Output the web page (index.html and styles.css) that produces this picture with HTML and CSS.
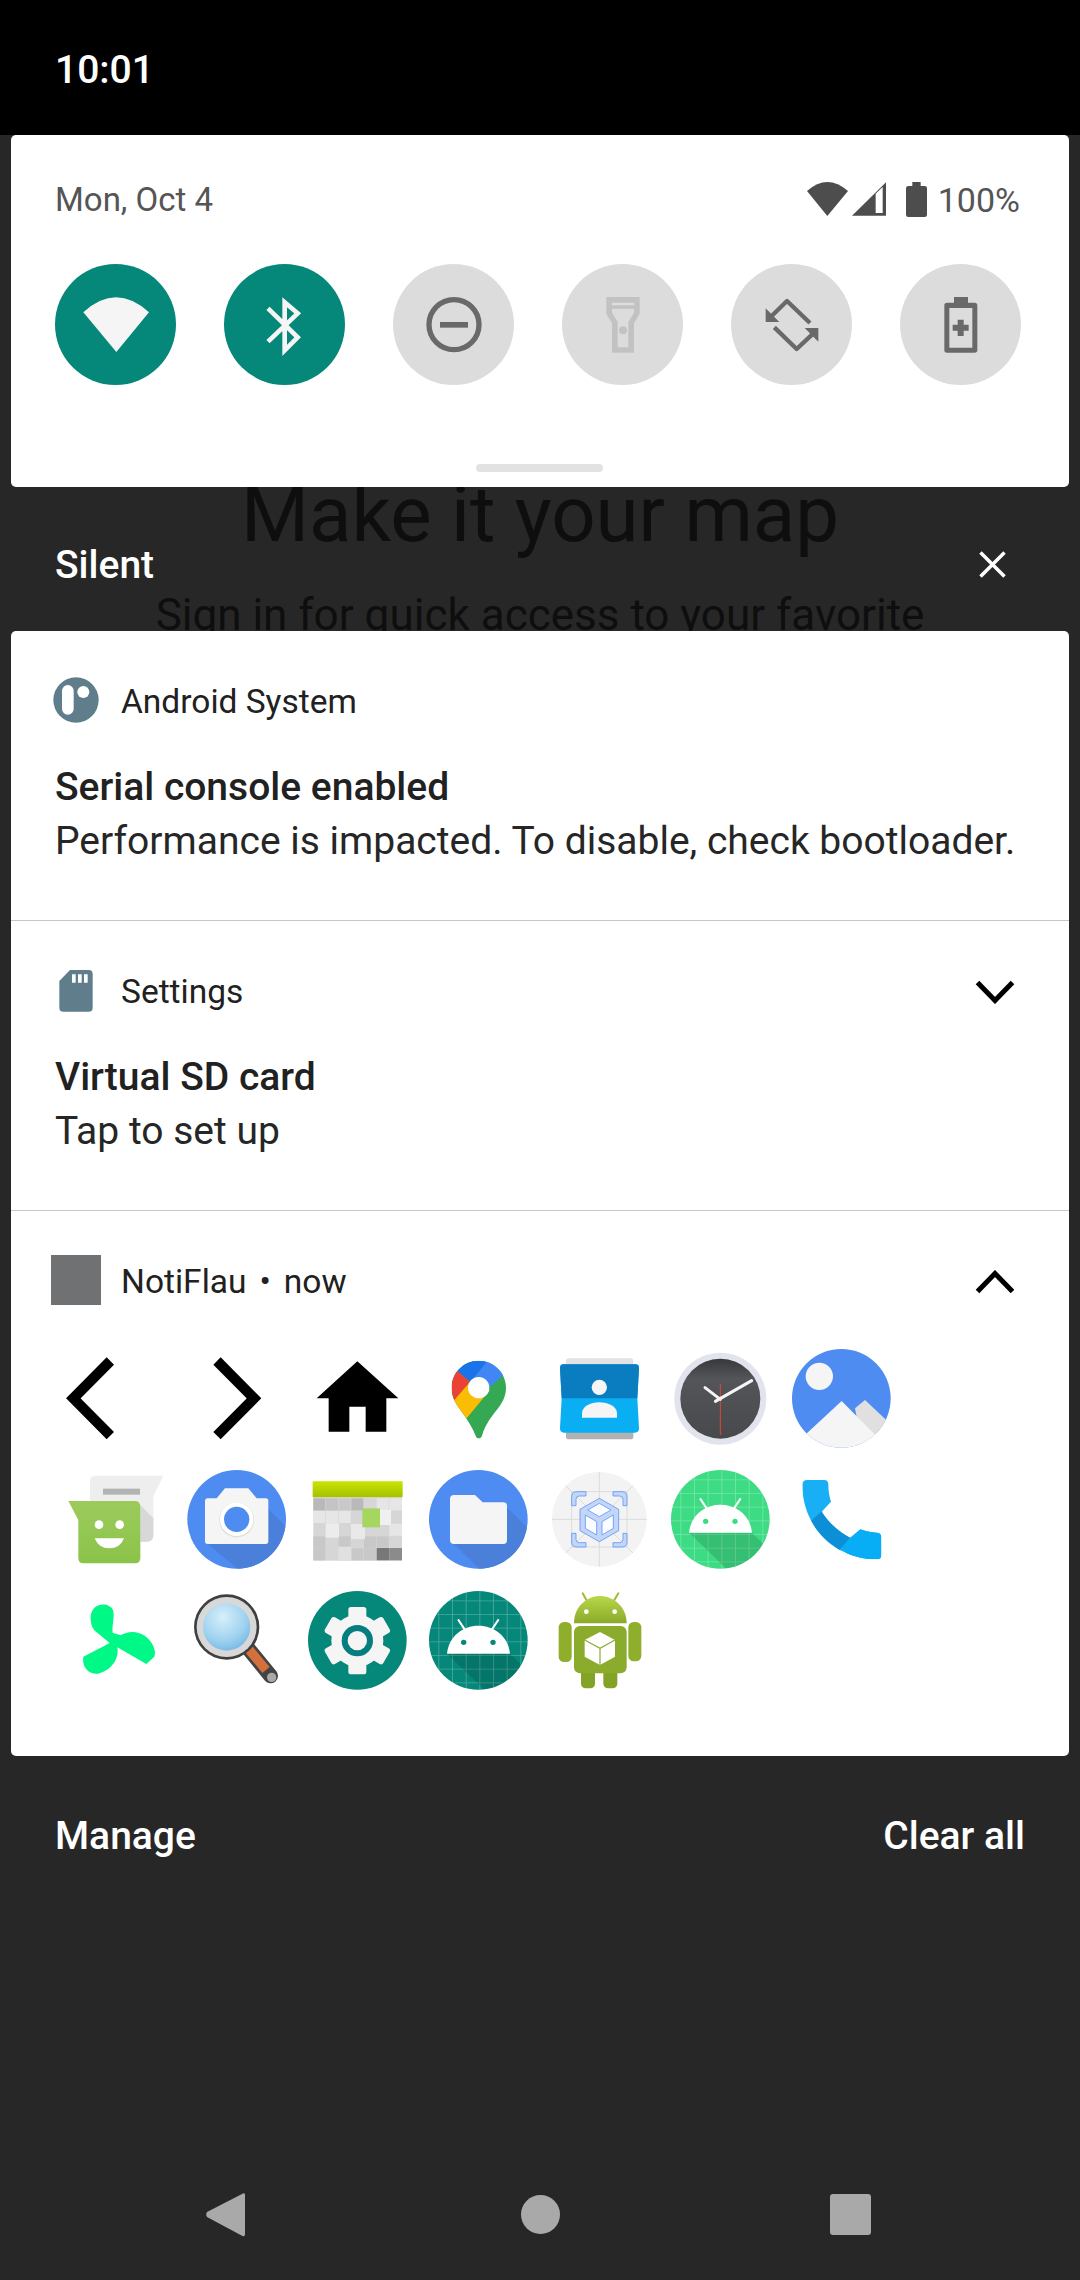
FILE: index.html
```html
<!DOCTYPE html>
<html lang="en">
<head>
<meta charset="utf-8">
<title>Notification shade</title>
<link rel="stylesheet" href="styles.css">
</head>
<body>
<svg class="defs" width="0" height="0" aria-hidden="true">
  <defs>
    <pattern id="grid" width="41" height="41" patternUnits="userSpaceOnUse" x="20" y="20">
      <path d="M0 0H41M0 0V41" stroke="#fff" stroke-opacity=".28" stroke-width="5" fill="none"/>
    </pattern>
    <symbol id="droid" viewBox="0 0 363 363">
      <circle cx="181" cy="181" r="148" fill="currentColor"/>
      <circle cx="181" cy="181" r="148" fill="url(#grid)"/>
      <clipPath id="droidclip"><circle cx="181" cy="181" r="148"/></clipPath>
      <path clip-path="url(#droidclip)" d="M87 221H276L345 290V340H210Z" fill="#000" fill-opacity=".13"/>
      <path d="M120 118L140 148M242 118L222 148" stroke="#fff" stroke-width="6" fill="none"/>
      <path d="M87 221C92 168 135 137 181 137C228 137 271 168 276 221Z" fill="#fff"/>
      <circle cx="137" cy="187" r="8" fill="currentColor"/>
      <circle cx="225" cy="187" r="8" fill="currentColor"/>
    </symbol>
    <linearGradient id="cal" x1="0" y1="0" x2="0" y2="1"><stop offset="0" stop-color="#c9e400"/><stop offset="1" stop-color="#a4c000"/></linearGradient>
    <linearGradient id="face" x1="0" y1="0" x2="0" y2="1"><stop offset="0" stop-color="#36383b"/><stop offset=".25" stop-color="#535558"/><stop offset="1" stop-color="#47494c"/></linearGradient>
    <radialGradient id="lens" cx=".42" cy=".3" r=".8"><stop offset="0" stop-color="#d8effa"/><stop offset=".6" stop-color="#9fd2f0"/><stop offset="1" stop-color="#6db2e0"/></radialGradient>
    <linearGradient id="dome" x1="0" y1="0" x2="0" y2="1"><stop offset="0" stop-color="#b9d84a"/><stop offset="1" stop-color="#8aa92a"/></linearGradient>
    <linearGradient id="msg" x1="0" y1="0" x2="0" y2="1"><stop offset="0" stop-color="#9ccb5c"/><stop offset="1" stop-color="#8bc34a"/></linearGradient>
  </defs>
</svg>

<div class="shade">
  <header class="status"><span class="clock">10:01</span></header>

  <section class="qs">
    <div class="qs-head">
      <span class="date">Mon, Oct 4</span>
      <div class="sys">
        <svg class="sys-wifi" viewBox="832 33 123 102"><path d="M832 60Q893 6 955 60L893 135Z"/></svg>
        <svg class="sys-signal" viewBox="965 35 102 102"><path d="M965 136L1067 36V136Z"/><path class="cut" d="M1036 128V70L1057 50V128Z"/></svg>
        <svg class="sys-batt" viewBox="1128 30 63 105"><path d="M1147 30H1172V42H1184Q1191 42 1191 49V128Q1191 135 1184 135H1135Q1128 135 1128 128V49Q1128 42 1135 42H1147Z"/></svg>
        <span class="pct">100%</span>
      </div>
    </div>
    <div class="tiles">
      <svg class="tile on" viewBox="75 42 363 363"><circle cx="256.500" cy="223.500" r="181.500"/><path class="gl" d="M160 187Q258 97 357 187L259 306Z"/></svg>
      <svg class="tile on" viewBox="582 42 363 363"><circle cx="763.500" cy="223.500" r="181.500"/><path class="gs" d="M714 175L803 262L764 301V157L803 190L714 275"/></svg>
      <svg class="tile" viewBox="1089 42 363 363"><circle cx="1270.500" cy="223.500" r="181.500"/><circle class="ds" cx="1272" cy="224" r="75"/><rect class="df" x="1230" y="216" width="84" height="17"/></svg>
      <svg class="tile" viewBox="96 282 363 363"><circle cx="277.500" cy="463.500" r="181.500"/><path class="tf" d="M229 381H329V431L312 460V548H246V460L229 431Z"/><path class="tb" d="M246 416H312V428L295 456V532H263V456L246 428Z"/><rect class="tb" x="245" y="398" width="68" height="8"/><circle class="tf" cx="279" cy="481" r="12"/></svg>
      <svg class="tile" viewBox="603 282 363 363"><circle cx="784.500" cy="463.500" r="181.500"/><path class="rs" d="M722 441L771 393L840 459M850 490L800 537L733 472"/><path class="df" d="M707 415V456H748ZM865 515V474H824Z"/></svg>
      <svg class="tile" viewBox="1110 282 363 363"><circle cx="1291.500" cy="463.500" r="181.500"/><path class="df" d="M1272 381H1314V398H1334Q1342 398 1342 406V540Q1342 548 1334 548H1251Q1243 548 1243 540V406Q1243 398 1251 398H1272ZM1258 414V533H1327V414Z"/><path class="df" d="M1283 449H1301V464H1316V482H1301V498H1283V482H1268V464H1283Z"/></svg>
    </div>
    <div class="handle"></div>
  </section>

  <div class="shelf">
    <div class="behind">
      <p class="behind-h">Make it your map</p>
      <p class="behind-p">Sign in for quick access to your favorite</p>
    </div>
    <span class="shelf-title">Silent</span>
    <svg class="shelf-x" viewBox="0 0 27 27"><path d="M1.500 1.500L25.500 25.500M25.500 1.500L1.500 25.500"/></svg>
  </div>

  <section class="card">
    <article class="notif">
      <div class="n-head">
        <svg class="n-icon" viewBox="33 36 150 150"><circle class="slate" cx="108" cy="105" r="68"/><rect class="white" x="66" y="60" width="35" height="89" rx="17.500"/><circle class="white" cx="130" cy="81" r="18"/></svg>
        <span class="app">Android System</span>
      </div>
      <h2 class="n-title">Serial console enabled</h2>
      <p class="n-body">Performance is impacted. To disable, check bootloader.</p>
    </article>

    <article class="notif">
      <div class="n-head">
        <svg class="n-icon" viewBox="33 903 150 150"><path class="slate" d="M90 912H146Q158 912 158 924V1025Q158 1037 146 1037H70Q58 1037 58 1025V945Z"/><path class="white" d="M96 925H107V950H96ZM114 925H125V950H114ZM132 925H143V950H132Z"/></svg>
        <span class="app">Settings</span>
        <svg class="chev" viewBox="0 0 40 24"><path d="M2.500 2.500L20 20.500L37.500 2.500"/></svg>
      </div>
      <h2 class="n-title">Virtual SD card</h2>
      <p class="n-body">Tap to set up</p>
    </article>

    <article class="notif last">
      <div class="n-head">
        <span class="n-square"></span>
        <span class="app">NotiFlau<span class="dot">•</span>now</span>
        <svg class="chev" viewBox="0 0 40 24"><path d="M2.500 21.500L20 3.500L37.500 21.500"/></svg>
      </div>
      <div class="icons">
        <!-- row 1 -->
        <svg class="ic" viewBox="75 294 363 363"><path class="k" d="M241 363L130 475L241 587"/></svg>
        <svg class="ic" viewBox="438 294 363 363"><path class="k" d="M561 363L672 475L561 587"/></svg>
        <svg class="ic" viewBox="801 294 363 363"><path d="M982 364L1105 475H1069V575H1007V500H958V575H896V475H860Z"/></svg>
        <svg class="ic" viewBox="-6 -6 363 363">
          <clipPath id="pin"><path d="M176 62C221 62 258 98 258 143C258 200 205 220 186 287C183 298 170 298 167 287C158 262 142 240 125 215C110 195 95 175 95 143C95 98 131 62 176 62Z"/></clipPath>
          <g clip-path="url(#pin)">
            <rect x="80" y="50" width="190" height="260" fill="#34a853"/>
            <path d="M150 125L90 190L140 235L210 150Z" fill="#fbbc04"/>
            <path d="M112 92L150 125L100 184L80 170V100Z" fill="#ea4335"/>
            <path d="M112 92L150 125L162 115L210 60H120Z" fill="#1a73e8"/>
            <path d="M205 60L160 115L205 145L250 106L240 60Z" fill="#4285f4"/>
          </g>
          <circle cx="176" cy="143" r="32" fill="#fff"/>
        </svg>
        <svg class="ic" viewBox="177 294 363 363">
          <rect x="258" y="355" width="202" height="30" rx="8" fill="#e2e2e2"/>
          <rect x="258" y="570" width="202" height="28" rx="8" fill="#b1b1b1"/>
          <path d="M250 373H467Q477 373 477 385L472 475L477 565Q477 578 465 578H252Q240 578 240 565L245 475L240 385Q240 373 250 373Z" fill="#0aaef2"/>
          <path d="M250 373H467Q477 373 477 385L472 475H245L240 385Q240 373 250 373Z" fill="#0a7dc1"/>
          <circle cx="358" cy="442" r="23" fill="#f5f5f5"/>
          <path d="M306 533H411V520C411 500 385 487 358 487C331 487 306 500 306 520Z" fill="#f5f5f5"/>
        </svg>
        <svg class="ic" viewBox="540 294 363 363">
          <circle cx="721" cy="476" r="138" fill="#e1e4ec"/>
          <circle cx="721" cy="476" r="120" fill="url(#face)"/>
          <path class="clock-r" d="M721 432V585"/>
          <path class="clock-h" d="M675 443L721 478M815 422L706 484"/>
        </svg>
        <svg class="ic" viewBox="903 294 363 363">
          <clipPath id="gal"><circle cx="1084" cy="475" r="148"/></clipPath>
          <circle cx="1084" cy="475" r="148" fill="#4e8cf2"/>
          <g clip-path="url(#gal)">
            <path d="M1125 505L1155 480L1240 560V640H1150Z" fill="#e0e0e0"/>
            <path d="M1085 483L1230 630H950L975 585Z" fill="#f5f5f5"/>
          </g>
          <circle cx="1018" cy="409" r="41" fill="#f5f5f5"/>
        </svg>
        <!-- row 2 -->
        <svg class="ic" viewBox="75 657 363 363">
          <path d="M198 707H400L370 768V885Q370 905 350 905H198Q180 905 180 885V725Q180 707 198 707Z" fill="#eee"/>
          <path d="M331 795L370 835V885Q370 905 350 905H331Z" fill="#d8d8d8"/>
          <rect x="219" y="746" width="111" height="18" fill="#b3b3b3"/>
          <path d="M115 783H315Q331 783 331 800V955Q331 970 315 970H160Q145 970 145 955V840Z" fill="url(#msg)"/>
          <circle cx="207" cy="854" r="13" fill="#fff"/><circle cx="269" cy="854" r="13" fill="#fff"/>
          <path d="M194 895H282Q270 925 238 925Q206 925 194 895Z" fill="#fff"/>
        </svg>
        <svg class="ic" viewBox="438 657 363 363">
          <clipPath id="cam"><circle cx="620" cy="838" r="148"/></clipPath>
          <circle cx="620" cy="838" r="148" fill="#4e8cf2"/>
          <path clip-path="url(#cam)" d="M680 775L800 890V1000H640L525 905Z" fill="#4a80da"/>
          <path d="M533 775H560L585 745H655L680 775H707Q715 775 715 783V904Q715 912 707 912H533Q525 912 525 904V783Q525 775 533 775Z" fill="#f5f5f5"/>
          <circle cx="620" cy="840" r="52" fill="#dedede"/>
          <circle cx="620" cy="838" r="50" fill="#fff"/><circle cx="620" cy="838" r="38" fill="#4e8cf2"/>
        </svg>
        <svg class="ic" viewBox="801 657 363 363">
          <rect x="850" y="772" width="266" height="190" fill="#d6d6d6"/>
          <g fill="#b9b9b9"><rect x="850" y="775" width="36" height="36"/><rect x="888" y="775" width="36" height="36" fill="#c4c4c4"/><rect x="926" y="775" width="36" height="36" fill="#c9c9c9"/><rect x="964" y="775" width="36" height="36"/></g>
          <g fill="#e6e6e6"><rect x="850" y="813" width="36" height="36"/><rect x="888" y="813" width="36" height="36"/><rect x="926" y="813" width="36" height="36"/><rect x="1040" y="775" width="36" height="36"/><rect x="1078" y="775" width="38" height="36"/><rect x="1078" y="851" width="38" height="36"/></g>
          <g fill="#c8c8c8"><rect x="850" y="889" width="36" height="36"/><rect x="926" y="889" width="36" height="36"/><rect x="1002" y="889" width="36" height="36"/><rect x="1040" y="889" width="36" height="34"/><rect x="850" y="925" width="36" height="36"/><rect x="964" y="925" width="36" height="36"/><rect x="1002" y="925" width="36" height="36"/></g>
          <rect x="1040" y="924" width="38" height="37" fill="#787878"/><rect x="1078" y="924" width="38" height="37" fill="#8b8b8b"/>
          <rect x="848" y="724" width="270" height="48" rx="3" fill="url(#cal)"/>
          <rect x="887" y="850" width="40" height="43" fill="#ececec"/>
          <rect x="963" y="852" width="42" height="45" fill="#e9e9e9"/>
          <rect x="925" y="920" width="39" height="42" fill="#e0e0e0"/>
          <rect x="1050" y="810" width="33" height="45" fill="#f0f0f0"/>
          <rect x="997" y="805" width="53" height="57" fill="#a6d65f"/>
        </svg>
        <svg class="ic" viewBox="1164 657 363 363">
          <clipPath id="fil"><circle cx="1345" cy="838" r="148"/></clipPath>
          <circle cx="1345" cy="838" r="148" fill="#4e8cf2"/>
          <path clip-path="url(#fil)" d="M1415 787L1520 890V1000H1360L1265 905Z" fill="#4a80da"/>
          <path d="M1272 765H1335L1358 787H1420Q1431 787 1431 798V900Q1431 912 1420 912H1272Q1260 912 1260 900V777Q1260 765 1272 765Z" fill="#f5f5f5"/>
        </svg>
        <svg class="ic" viewBox="177 657 363 363">
          <circle cx="358" cy="838" r="142" fill="#f3f3f3"/>
          <path class="ar-g" d="M358 696V980M216 838H500M257 737L459 939M459 737L257 939M275 755H441V921H275Z"/>
          <path class="ar-c" d="M275 797V770Q275 755 290 755H318V768H298Q288 768 288 778V797ZM441 797V770Q441 755 426 755H399V768H419Q429 768 429 778V797ZM275 880V906Q275 921 290 921H318V908H298Q288 908 288 898V880ZM441 880V906Q441 921 426 921H399V908H419Q429 908 429 898V880Z"/>
          <path class="ar-c" d="M358 775L416 808V872L358 905L300 872V808Z"/>
          <path class="ar-w" d="M358 790L393 810L358 830L323 810ZM316 825L350 845V885L316 865ZM400 825V865L366 885V845Z"/>
        </svg>
        <svg class="ic droid-g"><use href="#droid"/></svg>
        <svg class="ic" viewBox="903 657 363 363">
          <clipPath id="ph"><path d="M982 720H1032Q1045 720 1045 733C1045 755 1048 770 1053 785L1025 815C1050 855 1085 880 1110 893L1141 868C1155 873 1172 878 1190 878Q1204 878 1204 892V944Q1204 958 1190 958C1065 958 967 860 967 735Q967 720 982 720Z"/></clipPath>
          <g clip-path="url(#ph)">
            <rect x="960" y="715" width="250" height="250" fill="#18aff4"/>
            <path d="M1085 922L1141 868L1210 860V965H1120Z" fill="#08aef5"/>
            <path d="M985 850L1027 812L1113 890L1083 925L1060 960L980 900Z" fill="#0c8fd6"/>
          </g>
        </svg>
        <!-- row 3 -->
        <svg class="ic" viewBox="75 1020 363 363">
          <path class="fan" d="M238 1208L192 1170C178 1150 178 1115 195 1102C212 1088 240 1092 249 1110C255 1130 245 1160 248 1178L272 1186C290 1174 320 1170 345 1188C368 1205 380 1232 373 1250L349 1272L262 1222C268 1250 250 1290 205 1301C175 1304 155 1280 160 1250L238 1210Z"/>
        </svg>
        <svg class="ic" viewBox="438 1020 363 363">
          <path class="mg-o" d="M655 1226L722 1308"/>
          <path class="mg-i" d="M655 1226L708 1290"/>
          <circle cx="725" cy="1312" r="14" fill="#a9a9a9"/>
          <circle cx="590" cy="1161" r="98" fill="#3f3f3f"/>
          <circle cx="590" cy="1161" r="90" fill="#d8d8d8"/>
          <circle cx="590" cy="1161" r="71" fill="url(#lens)"/>
        </svg>
        <svg class="ic" viewBox="801 1020 363 363">
          <circle cx="982" cy="1201" r="148" fill="#058779"/>
          <g class="gear" transform="translate(982 1202)">
            <circle r="78"/>
            <rect x="-27" y="-101" width="54" height="50" rx="8"/>
            <rect x="-27" y="-101" width="54" height="50" rx="8" transform="rotate(60)"/>
            <rect x="-27" y="-101" width="54" height="50" rx="8" transform="rotate(120)"/>
            <rect x="-27" y="-101" width="54" height="50" rx="8" transform="rotate(180)"/>
            <rect x="-27" y="-101" width="54" height="50" rx="8" transform="rotate(240)"/>
            <rect x="-27" y="-101" width="54" height="50" rx="8" transform="rotate(300)"/>
            <circle r="47" fill="#067d7e"/>
            <circle r="29"/>
          </g>
        </svg>
        <svg class="ic droid-t"><use href="#droid"/></svg>
        <svg class="ic" viewBox="177 1020 363 363">
          <path class="bot-a" d="M308 1060L322 1085M415 1060L400 1085"/>
          <rect x="236" y="1146" width="39" height="120" rx="16" fill="#8fae2c"/>
          <rect x="445" y="1146" width="39" height="118" rx="16" fill="#8fae2c"/>
          <rect x="303" y="1285" width="42" height="60" rx="14" fill="#83a226"/>
          <rect x="370" y="1285" width="42" height="60" rx="14" fill="#83a226"/>
          <rect x="282" y="1158" width="158" height="142" rx="18" fill="#8bab2c"/>
          <path d="M282 1150C282 1100 320 1068 360 1068C400 1068 440 1100 440 1150Z" fill="url(#dome)"/>
          <circle cx="319" cy="1115" r="7" fill="#fff"/><circle cx="404" cy="1115" r="7" fill="#fff"/>
          <path d="M360 1176L405 1200V1250L360 1275L314 1250V1200Z" fill="#fff"/>
          <path class="bot-l" d="M314 1200L360 1225L405 1200M360 1225V1275"/>
        </svg>
      </div>
    </article>
  </section>

  <footer class="foot">
    <span class="act">Manage</span>
    <span class="act">Clear all</span>
  </footer>

  <nav class="navbar">
    <svg class="nv nv-back" viewBox="0 0 39 45"><path d="M37 1.500Q39 0.500 39 3V42Q39 45 36.500 44L1 25Q-0.500 22.500 1 20Z"/></svg>
    <span class="nv-home"></span>
    <span class="nv-rec"></span>
  </nav>
</div>
</body>
</html>
```

FILE: styles.css
```css
* { box-sizing: border-box; }
html, body { margin: 0; padding: 0; }
body { width: 1080px; height: 2280px; overflow: hidden; background: #272727; font-family: Roboto, "Noto Sans", sans-serif; }
.defs { display: block; height: 0; }
p, h2 { margin: 0; font-weight: inherit; font-size: inherit; }
svg { display: block; flex: none; }
.shade { display: flex; flex-direction: column; width: 1080px; height: 2280px; }

.status { height: 135px; background: #000; padding: 46px 0 0 55px; }
.clock { display: block; font-size: 39px; line-height: 48px; font-weight: 500; color: #fff; }

.qs { display: flex; flex-direction: column; height: 352px; margin: 0 11px; padding: 45px 48px 0 44px; background: #fff; border-radius: 5px; }
.qs-head { display: flex; align-items: center; justify-content: space-between; height: 40px; }
.date, .pct { font-size: 33px; line-height: 40px; color: #555; }
.sys { display: flex; align-items: center; }
.sys svg { fill: #4d4d4d; }
.sys-wifi { width: 41px; height: 34px; margin-top: -2px; }
.sys-signal { width: 34px; height: 34px; margin: -2px 0 0 4px; }
.sys-signal .cut { fill: #fff; }
.sys-batt { width: 21px; height: 35px; margin: -2px 0 0 20px; }
.pct { margin: 0 1px 0 11px; font-size: 34px; }
.tiles { display: flex; gap: 48px; margin-top: 44px; }
.tile { width: 121px; height: 121px; fill: #dcdcdc; }
.tile.on { fill: #058779; }
.tile .gl { fill: #f5f5f5; }
.tile .gs { fill: none; stroke: #f5f5f5; stroke-width: 14; }
.tile .ds { fill: none; stroke: #696969; stroke-width: 16; }
.tile .df { fill: #696969; }
.tile .tf { fill: #c2c2c2; }
.tile .tb { fill: #dcdcdc; }
.tile .rs { fill: none; stroke: #696969; stroke-width: 13; stroke-linejoin: round; }
.handle { align-self: center; width: 127px; height: 8px; margin: auto 0 15px 3px; border-radius: 4px; background: #e2e2e2; }

.shelf { position: relative; display: flex; justify-content: space-between; height: 144px; padding: 54px 74px 0 55px; overflow: hidden; }
.behind { position: absolute; top: 0; left: 0; width: 1080px; height: 144px; text-align: center; color: #0e0e0e; }
.behind-h { position: absolute; top: -12px; left: 0; width: 100%; font-size: 78px; line-height: 80px; }
.behind-p { position: absolute; top: 98px; left: 0; width: 100%; font-size: 44px; line-height: 60px; }
.shelf-title { position: relative; font-size: 39px; line-height: 48px; font-weight: 500; color: #fff; }
.shelf-x { position: relative; width: 27px; height: 27px; margin-top: 10px; fill: none; stroke: #fff; stroke-width: 3.500; }

.card { height: 1125px; margin: 0 11px; background: #fff; border-radius: 5px; color: #212121; }
.notif { height: 290px; padding: 51px 44px 0; border-bottom: 1px solid #c6c6c6; }
.notif.last { height: auto; border-bottom: 0; }
.n-head { display: flex; align-items: center; height: 40px; margin-left: -4px; }
.n-icon, .n-square { width: 50px; height: 50px; flex: none; }
.n-square { margin-top: -4px; background: #707173; }
.slate { fill: #607d8b; }
.white { fill: #fff; }
.app { margin-left: 20px; font-size: 33.500px; line-height: 40px; color: #212121; }
.dot { margin: 0 13px; }
.chev { width: 40px; height: 24px; margin: 0 10px 0 auto; fill: none; stroke: #000; stroke-width: 5; }
.n-title { margin-top: 38px; font-size: 39px; line-height: 54px; font-weight: 500; }
.n-body { font-size: 39px; line-height: 54px; color: #262626; }

.icons { display: grid; grid-template-columns: repeat(7, 121px); grid-auto-rows: 121px; margin-top: 36px; }
.ic { width: 121px; height: 121px; }
.k { fill: none; stroke: #000; stroke-width: 31; }
.clock-r { fill: none; stroke: #dd4a2c; stroke-width: 3; }
.clock-h { fill: none; stroke: #f5f5f5; stroke-width: 9; stroke-linecap: round; }
.ar-g { fill: none; stroke: #dcdcdc; stroke-width: 3; }
.ar-c { fill: #c3d6f8; stroke: #5f97f5; stroke-width: 2.500; }
.ar-w { fill: #fbfcff; stroke: #5f97f5; stroke-width: 2.500; }
.droid-g { color: #3ddc84; }
.droid-t { color: #058779; }
.fan { fill: #00f986; }
.mg-o { fill: none; stroke: #444; stroke-width: 44; stroke-linecap: round; }
.mg-i { fill: none; stroke: #d4703c; stroke-width: 28; }
.gear { fill: #f5f5f5; }
.bot-a { fill: none; stroke: #9dbc36; stroke-width: 6; stroke-linecap: round; }
.bot-l { fill: none; stroke: #8bab2c; stroke-width: 3.500; }

.foot { display: flex; justify-content: space-between; padding: 56px 55px 0 55px; }
.act { font-size: 39px; line-height: 48px; font-weight: 500; color: #fff; }

.navbar { display: flex; align-items: center; height: 131px; margin-top: auto; padding-left: 206px; }
.nv-back { width: 39px; height: 45px; fill: #a9a9a9; }
.nv-home { width: 39px; height: 39px; margin-left: 276px; border-radius: 50%; background: #a9a9a9; }
.nv-rec { width: 41px; height: 41px; margin-left: 270px; border-radius: 3px; background: #a9a9a9; }
```
